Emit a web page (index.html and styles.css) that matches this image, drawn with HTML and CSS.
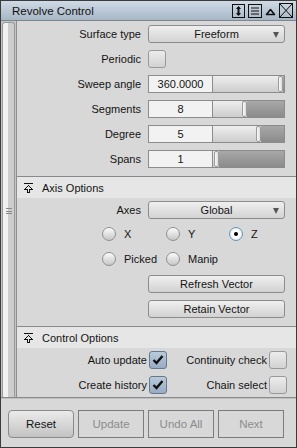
FILE: index.html
```html
<!DOCTYPE html>
<html lang="en">
<head>
    <meta charset="UTF-8">
    <title>Revolve Control</title>
    <link rel="stylesheet" href="styles.css">
</head>
<body>
    <div class="window">
        <div class="titlebar">
            <span class="title">Revolve Control</span>
            <div class="title-icons">
                <svg width="13" height="14" viewBox="0 0 13 14"><rect x="0.5" y="0.5" width="12" height="13" fill="none" stroke="#111"/><path d="M6.5 3v8" stroke="#111" stroke-width="2"/><path d="M4 5l2.5-3 2.5 3zM4 9l2.5 3 2.5-3z" fill="#111"/></svg>
                <svg width="14" height="14" viewBox="0 0 14 14"><rect x="0.5" y="0.5" width="13" height="13" fill="none" stroke="#111"/><path d="M3 4h8M3 7h8M3 10h8" stroke="#111" stroke-width="1.2"/></svg>
                <svg width="11" height="14" viewBox="0 0 11 14"><path d="M1.5 10.5l4-5 4 5z" fill="none" stroke="#111" stroke-width="1.6" stroke-linejoin="round"/></svg>
                <svg width="14" height="15" viewBox="0 0 14 15"><rect x="0.5" y="0.5" width="13" height="14" fill="none" stroke="#111"/><path d="M1 1l12 13M13 1L1 14" stroke="#111"/></svg>
            </div>
        </div>
        <div class="main">
            <div class="strip">
                <div class="handle"><span class="grip"></span></div>
            </div>
            <div class="content">
                <div class="form">
                    <label>Surface type</label>
                    <div class="dropdown">Freeform<span class="arrow"></span></div>

                    <label>Periodic</label>
                    <div><span class="check"></span></div>

                    <label>Sweep angle</label>
                    <div class="field-slider">
                        <span class="field">360.0000</span>
                        <span class="slider"><span class="fill" style="width:65px"></span><span class="thumb"></span><span class="rest"></span></span>
                    </div>

                    <label>Segments</label>
                    <div class="field-slider">
                        <span class="field">8</span>
                        <span class="slider"><span class="fill" style="width:29px"></span><span class="thumb"></span><span class="rest"></span></span>
                    </div>

                    <label>Degree</label>
                    <div class="field-slider">
                        <span class="field">5</span>
                        <span class="slider"><span class="fill" style="width:43px"></span><span class="thumb"></span><span class="rest"></span></span>
                    </div>

                    <label>Spans</label>
                    <div class="field-slider">
                        <span class="field">1</span>
                        <span class="slider"><span class="fill" style="width:1px"></span><span class="thumb"></span><span class="rest"></span></span>
                    </div>
                </div>

                <div class="section">
                    <div class="section-head">
                        <svg width="9" height="10" viewBox="0 0 9 10" shape-rendering="crispEdges"><path d="M0 0.5h9" stroke="#111"/><path d="M4.5 2.5L1 6h2.5v3h2v-3H8z" fill="none" stroke="#111"/></svg>
                        <span>Axis Options</span>
                    </div>
                    <div class="axis-body">
                        <div class="form tight">
                            <label>Axes</label>
                            <div class="dropdown">Global<span class="arrow"></span></div>
                        </div>
                        <div class="radios">
                            <span class="radio-item"><span class="radio"></span>X</span>
                            <span class="radio-item"><span class="radio"></span>Y</span>
                            <span class="radio-item"><span class="radio on"></span>Z</span>
                            <span class="radio-item"><span class="radio"></span>Picked</span>
                            <span class="radio-item"><span class="radio"></span>Manip</span>
                        </div>
                        <div class="buttons">
                            <button class="btn">Refresh Vector</button>
                            <button class="btn">Retain Vector</button>
                        </div>
                    </div>
                </div>

                <div class="section">
                    <div class="section-head">
                        <svg width="9" height="10" viewBox="0 0 9 10" shape-rendering="crispEdges"><path d="M0 0.5h9" stroke="#111"/><path d="M4.5 2.5L1 6h2.5v3h2v-3H8z" fill="none" stroke="#111"/></svg>
                        <span>Control Options</span>
                    </div>
                    <div class="control-body">
                        <label>Auto update</label>
                        <span class="check on"><svg width="12" height="10" viewBox="0 0 12 10"><path d="M1.5 5l3 3 6-7" fill="none" stroke="#111" stroke-width="2.4"/></svg></span>
                        <label>Continuity check</label>
                        <span class="check"></span>

                        <label>Create history</label>
                        <span class="check on"><svg width="12" height="10" viewBox="0 0 12 10"><path d="M1.5 5l3 3 6-7" fill="none" stroke="#111" stroke-width="2.4"/></svg></span>
                        <label>Chain select</label>
                        <span class="check"></span>
                    </div>
                </div>
            </div>
        </div>
        <div class="footer">
            <button class="big">Reset</button>
            <button class="big off">Update</button>
            <button class="big off">Undo All</button>
            <button class="big off">Next</button>
        </div>
    </div>
</body>
</html>
```

FILE: styles.css
```css
* {
    box-sizing: border-box;
}
body {
    margin: 0;
    font-family: "Liberation Sans", Arial, sans-serif;
    font-size: 11px;
    color: #141414;
    background: #d8d8d8;
}
.window {
    width: 297px;
    height: 448px;
    border: 1px solid #3c3c3c;
    display: flex;
    flex-direction: column;
    background: #d8d8d8;
}
.titlebar {
    height: 20px;
    flex: none;
    display: flex;
    align-items: center;
    justify-content: space-between;
    padding: 0 3px 0 11px;
    background: linear-gradient(#cfdae5, #a8b7c6);
    border-bottom: 1px solid #7d8792;
}
.title {
    font-size: 11.5px;
    color: #111;
}
.title-icons {
    display: flex;
    align-items: center;
    gap: 3px;
}
.title-icons svg {
    display: block;
}
.main {
    flex: 1;
    display: flex;
    min-height: 0;
}
.strip {
    width: 16px;
    flex: none;
    padding: 1px 1px 0 1px;
    background: #c4c4c4;
    border-right: 1px solid #8e8e8e;
}
.handle {
    height: 100%;
    border: 1px solid #9a9a9a;
    border-bottom: none;
    border-radius: 3px 3px 0 0;
    background: linear-gradient(to right, #f1f1f1 0, #f1f1f1 45%, #cdcdcd 45%);
    display: flex;
    justify-content: center;
    padding-top: 185px;
}
.grip {
    width: 6px;
    height: 6px;
    border-top: 1px solid #888;
    border-bottom: 1px solid #888;
    background: linear-gradient(#888, #888) center / 100% 1px no-repeat;
}
.content {
    flex: 1;
    display: flex;
    flex-direction: column;
}
.form {
    display: grid;
    grid-template-columns: 124px 137px;
    column-gap: 7px;
    row-gap: 7px;
    align-items: center;
    padding: 4px 0 8px;
}
.form.tight {
    padding: 0;
}
.form label {
    text-align: right;
}
.dropdown {
    height: 18px;
    position: relative;
    border: 1px solid #8c8c8c;
    border-radius: 3px;
    background: linear-gradient(#efefef, #d3d3d3);
    text-align: center;
    line-height: 16px;
}
.arrow {
    position: absolute;
    right: 5px;
    top: 6px;
    border-left: 3.5px solid transparent;
    border-right: 3.5px solid transparent;
    border-top: 6px solid #555;
}
.check {
    width: 18px;
    height: 18px;
    display: flex;
    align-items: center;
    justify-content: center;
    border: 1px solid #999;
    border-radius: 3px;
    background: linear-gradient(#ececec, #d2d2d2);
}
.check.on {
    border-color: #66788c;
    background: linear-gradient(#b9cadc, #97abc2);
}
.field-slider {
    height: 18px;
    display: flex;
}
.field {
    width: 65px;
    border: 1px solid #8c8c8c;
    background: #f2f2f2;
    text-align: center;
    line-height: 16px;
}
.slider {
    flex: 1;
    display: flex;
    border: 1px solid #8c8c8c;
    border-left: none;
    background: #ddd;
}
.fill {
    background: linear-gradient(#eeeeee, #cdcdcd);
}
.thumb {
    width: 5px;
    flex: none;
    border: 1px solid #9c9c9c;
    border-radius: 2px;
    background: linear-gradient(to right, #fafafa, #dcdcdc);
}
.rest {
    flex: 1;
    background: linear-gradient(#a8a8a8, #8b8b8b);
}
.section {
    border-top: 1px solid #8a8a8a;
}
.section-head {
    height: 21px;
    display: flex;
    align-items: center;
    gap: 9px;
    padding-left: 7px;
    background: #e6e6e6;
}
.section-head svg {
    display: block;
}
.axis-body {
    padding: 3px 0 8px;
}
.radios {
    display: grid;
    grid-template-columns: 64px 63px 40px;
    row-gap: 11px;
    padding: 8px 0 0 85px;
}
.radio-item {
    display: flex;
    align-items: center;
    gap: 8px;
    height: 14px;
}
.radio {
    width: 14px;
    height: 14px;
    border-radius: 50%;
    border: 1px solid #909090;
    background: linear-gradient(#fbfbfb, #c6c6c6);
    display: flex;
    align-items: center;
    justify-content: center;
}
.radio.on {
    border-color: #7f8e9c;
    background: radial-gradient(circle, #ffffff 40%, #c9dbe6 100%);
    box-shadow: 0 0 1px 1px #c6dfee;
}
.radio.on::after {
    content: "";
    width: 4px;
    height: 4px;
    border-radius: 50%;
    background: #000;
}
.buttons {
    display: flex;
    flex-direction: column;
    gap: 7px;
    padding: 9px 0 0 131px;
}
.btn {
    width: 137px;
    height: 18px;
    padding: 0;
    font: inherit;
    color: #141414;
    border: 1px solid #8c8c8c;
    border-radius: 3px;
    background: linear-gradient(#efefef, #d2d2d2);
}
.control-body {
    display: grid;
    grid-template-columns: 130px 18px 98px 18px;
    column-gap: 2px;
    row-gap: 7px;
    align-items: center;
    padding-top: 3px;
}
.control-body label {
    text-align: right;
}
.footer {
    height: 50px;
    flex: none;
    display: flex;
    gap: 4px;
    padding: 12px 0 0 7px;
    border-top: 1px solid #8a8a8a;
    box-shadow: inset 0 1px 0 #c0c0c0;
}
.big {
    width: 66px;
    height: 28px;
    padding: 0;
    font: inherit;
    font-size: 11.5px;
    color: #8c8c8c;
    border: 1px solid #7c7c7c;
    background: #d8d8d8;
}
.big:not(.off) {
    color: #141414;
    border-color: #8a8a8a;
    border-radius: 4px;
    background: linear-gradient(#ebebeb, #c3c3c3);
}
```
